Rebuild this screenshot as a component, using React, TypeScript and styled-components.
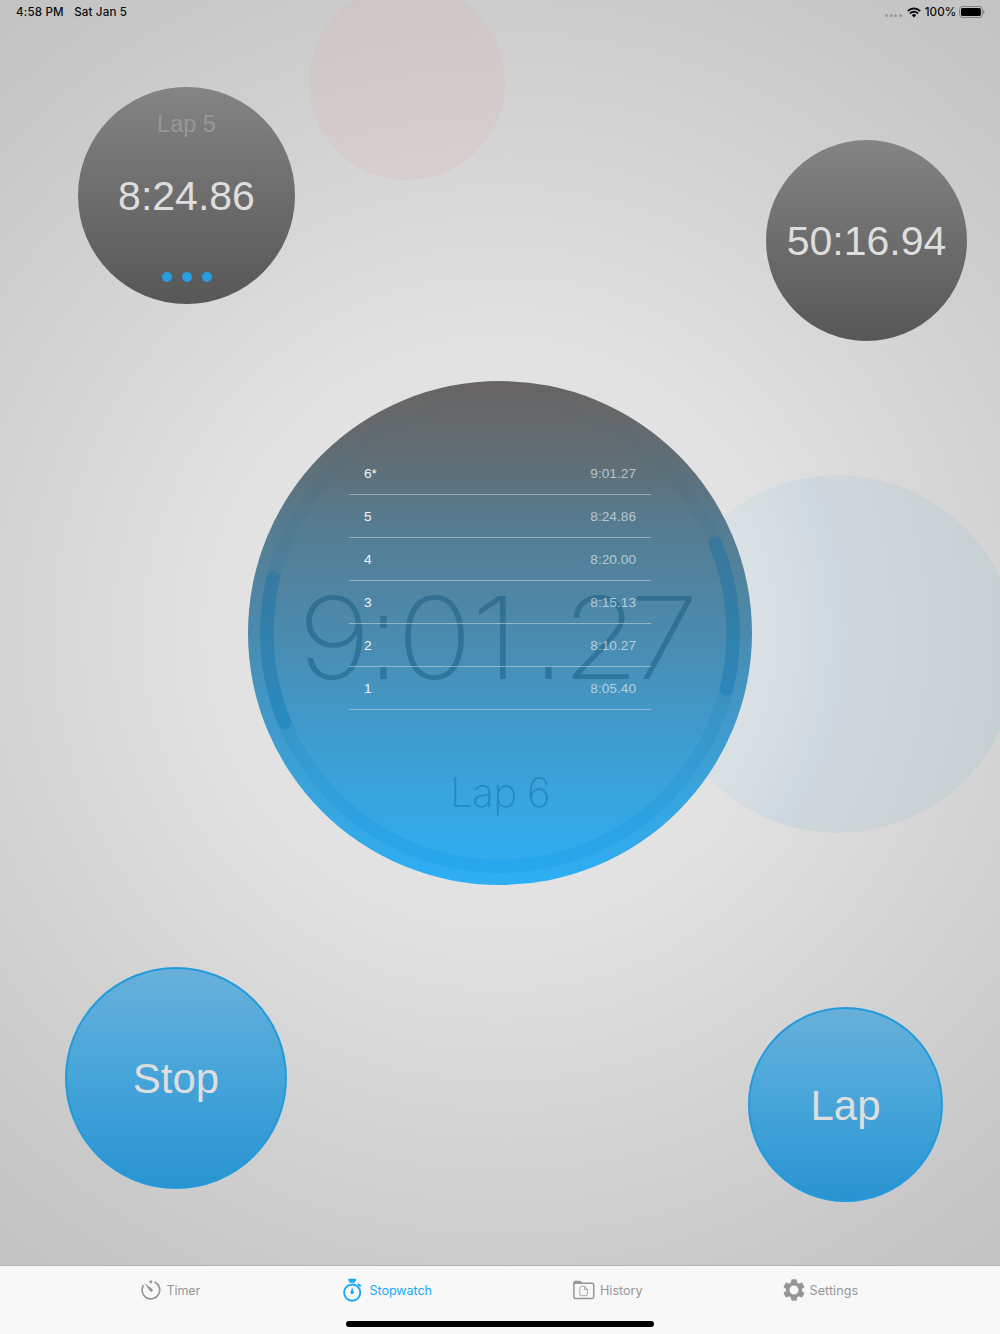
import React from "react";
import styled, { createGlobalStyle } from "styled-components";

const Global = createGlobalStyle`
  * { box-sizing: border-box; }
  html, body { margin: 0; padding: 0; }
  body { font-family: "Liberation Sans", Arial, sans-serif; overflow: hidden; }
`;

const Screen = styled.div`
  position: relative;
  display: flex;
  flex-direction: column;
  width: 1000px;
  height: 1334px;
  overflow: hidden;
  background: #f8f8f8;
`;

const StatusBar = styled.header`
  position: relative;
  display: flex;
  justify-content: space-between;
  align-items: center;
  height: 24px;
  padding: 0 15px 0 16px;
  font: 500 11.6px/24px Inter, sans-serif;
  letter-spacing: 0.14px;
  color: #0c0c0c;
`;

const StatusGroup = styled.div<{ $gap: number }>`
  display: flex;
  align-items: center;
  gap: ${(p) => p.$gap}px;
`;

const Canvas = styled.main`
  position: relative;
  display: flex;
  flex-direction: column;
  height: 1265px;
  overflow: hidden;
  background: radial-gradient(circle 830px at 500px 633px, #e8e8e8 0%, #e2e2e2 33%, #d3d3d3 62%, #c7c7c7 86%, #c2c2c2 100%);
`;

const Orb = styled.div<{ $x: number; $y: number; $size: number; $fill: string }>`
  position: absolute;
  left: ${(p) => p.$x}px;
  top: ${(p) => p.$y}px;
  width: ${(p) => p.$size}px;
  height: ${(p) => p.$size}px;
  border-radius: 50%;
  background: ${(p) => p.$fill};
`;

const Row = styled.section<{ $height: number; $pad: string }>`
  display: flex;
  justify-content: space-between;
  align-items: flex-start;
  height: ${(p) => p.$height}px;
  padding: ${(p) => p.$pad};
`;

const Bubble = styled.div<{ $size: number; $drop?: number }>`
  display: flex;
  flex-direction: column;
  align-items: center;
  width: ${(p) => p.$size}px;
  height: ${(p) => p.$size}px;
  margin-top: ${(p) => p.$drop ?? 0}px;
  border-radius: 50%;
  background: linear-gradient(#848484, #6d6d6d 50%, #575757);
  color: #dedede;
`;

const ActionButton = styled.button<{ $size: number; $drop: number }>`
  width: ${(p) => p.$size}px;
  height: ${(p) => p.$size}px;
  margin: ${(p) => p.$drop}px 0 0;
  padding: 2px 0 0;
  border: 2px solid #239bdb;
  border-radius: 50%;
  background: linear-gradient(#68b1da, #47a5da 48%, #2893d1);
  background-origin: border-box;
  color: #dedede;
  font: 42px/48px "Liberation Sans", Arial, sans-serif;
`;

const BubbleLabel = styled.div`
  margin-top: 23px;
  font-size: 23.5px;
  line-height: 28px;
  color: #979797;
`;

const BubbleTime = styled.div<{ $top: number }>`
  margin-top: ${(p) => p.$top}px;
  font-size: 41px;
  line-height: 48px;
`;

const Dots = styled.div`
  display: flex;
  gap: 10px;
  margin: 52px 0 0;
`;

const Dot = styled.span`
  width: 10px;
  height: 10px;
  border-radius: 50%;
  background: #289fdf;
`;

const Dial = styled.section`
  position: relative;
  width: 504px;
  height: 504px;
  flex: none;
  margin: 0 auto;
  padding-top: 71px;
  border-radius: 50%;
  background: linear-gradient(#676463 0%, #666869 6%, #5e7079 18%, #567b8f 28%, #4b8bae 50%, #4297c6 65%, #39a4dc 81%, #31abed 94%, #2eaff4 100%);
`;

const Ring = styled.svg`
  position: absolute;
  inset: 0;
`;

const GhostTime = styled.div`
  position: absolute;
  top: 192px;
  left: 53px;
  display: flex;
  height: 128px;
  color: rgba(27, 95, 133, 0.55);
`;

const Digit = styled.span<{ $nudge?: number }>`
  width: 66px;
  margin-right: ${(p) => -(p.$nudge ?? 0)}px;
  margin-left: ${(p) => p.$nudge ?? 0}px;
  font: 170 114px/129px Inter, sans-serif;
  text-align: center;
  transform: scaleX(1.1);
`;

const Point = styled.span`
  width: 33px;
  font: 118px/130px "Liberation Sans", Arial, sans-serif;
  text-align: center;
  transform: scaleX(0.56);
`;

const GhostLabel = styled.div`
  position: absolute;
  top: 391px;
  left: 0;
  width: 504px;
  text-align: center;
  font: 170 40.5px/41px Inter, sans-serif;
  letter-spacing: -0.7px;
  color: rgba(10, 110, 165, 0.5);
`;

const LapList = styled.ul`
  position: relative;
  width: 302px;
  margin: 0 auto;
  padding: 0;
  list-style: none;
`;

const LapRow = styled.li`
  display: flex;
  justify-content: space-between;
  height: 43px;
  padding: 4px 15px 0;
  border-bottom: 1px solid rgba(205, 215, 222, 0.55);
  font-size: 13.7px;
  line-height: 36px;
  color: #f2f5f7;
`;

const LapTime = styled.span`
  color: rgba(235, 240, 243, 0.66);
`;

const TabBar = styled.nav`
  display: flex;
  position: relative;
  height: 69px;
  border-top: 1px solid #b2b2b2;
  background: #f8f8f8;
`;

const TabSlot = styled.div`
  width: 250px;
`;

const Tab = styled.a<{ $active?: boolean; $lead: number; $gap: number }>`
  display: flex;
  align-items: center;
  height: 48px;
  margin-left: ${(p) => p.$lead}px;
  gap: ${(p) => p.$gap}px;
  font: 400 12.6px/16px Inter, sans-serif;
  color: ${(p) => (p.$active ? "#18a9f6" : "#969696")};
`;

const TabLabel = styled.span<{ $spacing?: number }>`
  padding-top: 1px;
  letter-spacing: ${(p) => p.$spacing ?? 0}px;
`;

const HomeIndicator = styled.div`
  position: absolute;
  left: 346px;
  bottom: 7px;
  width: 308px;
  height: 6px;
  border-radius: 3px;
  background: #000;
`;

const TimerIcon = () => (
  <svg width="20" height="20" viewBox="0 0 20 20" fill="none" stroke="currentColor">
    <path d="M2.5 5.3A8.8 8.8 0 1 0 13.6 2.1" strokeWidth="1.7" />
    <circle cx="9.9" cy="1.8" r="1.5" fill="currentColor" stroke="none" />
    <path d="M3.3 3.1L11.4 9.1A1.6 1.6 0 0 1 9.1 11.3Z" fill="currentColor" stroke="none" />
  </svg>
);

const StopwatchIcon = () => (
  <svg width="19" height="24" viewBox="0 0 19 24" fill="none" stroke="currentColor">
    <circle cx="9.2" cy="14.6" r="8.1" strokeWidth="1.9" />
    <path d="M6 .7H12.4Q13.4.7 13.2 2Q13 3.4 11.9 3.6V4.8H6.5V3.6Q5.4 3.4 5.2 2Q5 .7 6 .7Z" fill="currentColor" stroke="none" />
    <path d="M15 6.1L17.8 8.3" strokeWidth="2" />
    <path d="M8.8 10.2H9.6L10.9 14.6A1.7 1.7 0 1 1 7.5 14.6Z" fill="currentColor" stroke="none" />
  </svg>
);

const HistoryIcon = () => (
  <svg width="22" height="20" viewBox="0 0 22 20" fill="none" stroke="currentColor">
    <rect x="0.9" y="3.2" width="19.8" height="15.4" rx="1.7" strokeWidth="1.5" />
    <path d="M.2 5V2.5Q.2.8 2 .8H7Q8.8.8 9.2 3.5L8.5 4H1.2Z" fill="currentColor" stroke="none" />
    <path d="M8.3 6.4H11.6L14.4 9.3V14.2Q14.4 15.7 12.9 15.7H8.3Q6.8 15.7 6.8 14.2V7.9Q6.8 6.4 8.3 6.4ZM11.5 6.6V9.4H14.2" strokeWidth="0.8" />
  </svg>
);

const SettingsIcon = () => (
  <svg width="22" height="22" viewBox="1.7 1.7 20.6 20.6" fill="currentColor">
    <path d="M19.43 12.98c.04-.32.07-.64.07-.98s-.03-.66-.07-.98l2.11-1.65c.19-.15.24-.42.12-.64l-2-3.46c-.12-.22-.39-.3-.61-.22l-2.49 1c-.52-.4-1.08-.73-1.69-.98l-.38-2.65C14.46 2.18 14.25 2 14 2h-4c-.25 0-.46.18-.49.42l-.38 2.65c-.61.25-1.17.59-1.69.98l-2.49-1c-.23-.09-.49 0-.61.22l-2 3.46c-.13.22-.07.49.12.64l2.11 1.65c-.04.32-.07.65-.07.98s.03.66.07.98l-2.11 1.65c-.19.15-.24.42-.12.64l2 3.46c.12.22.39.3.61.22l2.49-1c.52.4 1.08.73 1.69.98l.38 2.65c.03.24.24.42.49.42h4c.25 0 .46-.18.49-.42l.38-2.65c.61-.25 1.17-.59 1.69-.98l2.49 1c.23.09.49 0 .61-.22l2-3.46c.12-.22.07-.49-.12-.64l-2.11-1.65zM12 16.2a4.2 4.2 0 1 1 0-8.4 4.2 4.2 0 0 1 0 8.4z" />
  </svg>
);

const SignalDots = styled.span`
  display: flex;
  gap: 1.4px;
  padding: 7px 1px 0 0;
`;

const SignalDot = styled.i`
  width: 3px;
  height: 3px;
  border-radius: 50%;
  background: #999;
`;

const WifiIcon = () => (
  <svg width="14" height="11" viewBox="0 0 14 11" fill="none" stroke="#0c0c0c" strokeWidth="1.8">
    <path d="M.8 4.1A8.7 8.7 0 0 1 13.2 4.1" />
    <path d="M2.9 6.5A5.7 5.7 0 0 1 11.1 6.5" />
    <path d="M7 10.5L4.8 8.2A3.1 3.1 0 0 1 9.2 8.2Z" fill="#0c0c0c" stroke="none" />
  </svg>
);

const BatterySvg = styled.svg`
  margin-left: -1.5px;
`;

const BatteryIcon = () => (
  <BatterySvg width="26" height="12" viewBox="0 0 26 12">
    <rect x="0.6" y="0.5" width="22.6" height="11" rx="3" fill="none" stroke="#808080" />
    <rect x="2" y="1.9" width="19.8" height="8.2" rx="1.7" fill="#000" />
    <path d="M24.2 4V8Q25.6 7.5 25.6 6T24.2 4Z" fill="#808080" />
  </BatterySvg>
);

const laps: [string, string][] = [
  ["6*", "9:01.27"],
  ["5", "8:24.86"],
  ["4", "8:20.00"],
  ["3", "8:15.13"],
  ["2", "8:10.27"],
  ["1", "8:05.40"],
];

export default function App() {
  return (
    <Screen>
      <Global />
      <Canvas>
        <Orb $x={309} $y={-16} $size={196} $fill="rgba(212, 184, 182, 0.26)" />
        <Orb
          $x={659}
          $y={475}
          $size={358}
          $fill="radial-gradient(circle 560px at -159px 158px, #dae1e4 0 250px, #d5dde0 298px, #d2dae1 318px, #ced6df 346px, #cfd7db 366px, #ccd4d7 420px, #c6cfd2 510px)"
        />
        <StatusBar>
          <StatusGroup $gap={10.5}>
            <span>4:58 PM</span>
            <span>Sat Jan 5</span>
          </StatusGroup>
          <StatusGroup $gap={4}>
            <SignalDots>
              <SignalDot />
              <SignalDot />
              <SignalDot />
              <SignalDot />
            </SignalDots>
            <WifiIcon />
            <span>100%</span>
            <BatteryIcon />
          </StatusGroup>
        </StatusBar>
        <Row $height={357} $pad="63px 33px 0 78px">
          <Bubble $size={217}>
            <BubbleLabel>Lap 5</BubbleLabel>
            <BubbleTime $top={34}>8:24.86</BubbleTime>
            <Dots>
              <Dot />
              <Dot />
              <Dot />
            </Dots>
          </Bubble>
          <Bubble $size={201} $drop={53}>
            <BubbleTime $top={77}>50:16.94</BubbleTime>
          </Bubble>
        </Row>
        <Dial>
          <Ring width="504" height="504" viewBox="0 0 504 504" fill="none">
            <defs>
              <linearGradient id="track" x1="0" y1="0" x2="0" y2="504" gradientUnits="userSpaceOnUse">
                <stop offset="0" stopColor="#50606a" stopOpacity="0.08" />
                <stop offset="0.5" stopColor="#0a70a5" stopOpacity="0.12" />
                <stop offset="1" stopColor="#0a98ea" stopOpacity="0.24" />
              </linearGradient>
            </defs>
            <circle cx="252" cy="252" r="233.3" stroke="url(#track)" strokeWidth="13.5" />
            <g stroke="rgba(0,110,175,.26)" strokeWidth="13.5" strokeLinecap="round">
              <path d="M467.3 162.3A233.3 233.3 0 0 1 478.5 307.8" />
              <path d="M36.7 341.7A233.3 233.3 0 0 1 25.5 196.2" />
            </g>
          </Ring>
          <GhostTime>
            <Digit>9</Digit>
            <Point>:</Point>
            <Digit>0</Digit>
            <Digit $nudge={-4}>1</Digit>
            <Point>.</Point>
            <Digit>2</Digit>
            <Digit>7</Digit>
          </GhostTime>
          <GhostLabel>Lap 6</GhostLabel>
          <LapList>
            {laps.map(([n, t]) => (
              <LapRow key={n}>
                <span>{n}</span>
                <LapTime>{t}</LapTime>
              </LapRow>
            ))}
          </LapList>
        </Dial>
        <Row $height={380} $pad="81.5px 57px 0 65px">
          <ActionButton $size={222} $drop={0}>Stop</ActionButton>
          <ActionButton $size={195} $drop={40.5}>Lap</ActionButton>
        </Row>
      </Canvas>
      <TabBar>
        <TabSlot>
          <Tab $lead={140.5} $gap={6}>
            <TimerIcon />
            <TabLabel $spacing={-0.15}>Timer</TabLabel>
          </Tab>
        </TabSlot>
        <TabSlot>
          <Tab $active $lead={93} $gap={7.5}>
            <StopwatchIcon />
            <TabLabel $spacing={-0.08}>Stopwatch</TabLabel>
          </Tab>
        </TabSlot>
        <TabSlot>
          <Tab $lead={73} $gap={5}>
            <HistoryIcon />
            <TabLabel>History</TabLabel>
          </Tab>
        </TabSlot>
        <TabSlot>
          <Tab $lead={32.5} $gap={5}>
            <SettingsIcon />
            <TabLabel $spacing={0.05}>Settings</TabLabel>
          </Tab>
        </TabSlot>
        <HomeIndicator />
      </TabBar>
    </Screen>
  );
}
